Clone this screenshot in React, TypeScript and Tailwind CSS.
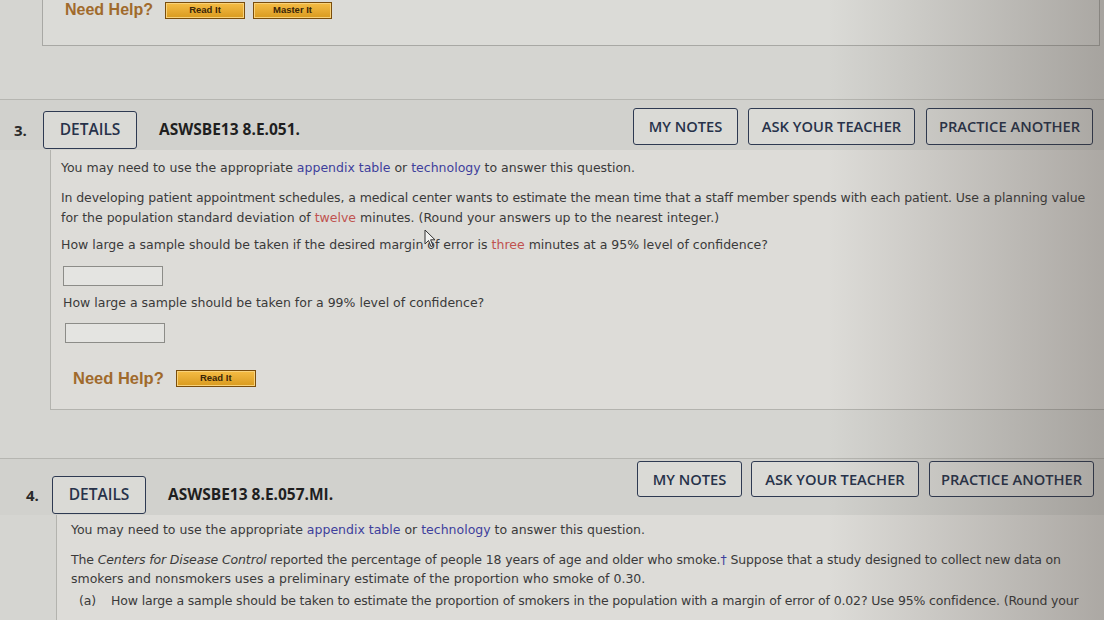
import React from "react";

const body = "font-['DejaVu_Sans',sans-serif]";
const ui = "font-['Open_Sans',sans-serif]";

function ReadBtn({ label, w }: { label: string; w: string }) {
  return (
    <div
      className={`${w} h-[17px] flex items-center justify-center border border-[#7a4d0b] bg-linear-to-b from-[#f5bd45] to-[#d99a1c] shadow-[inset_0_0_0_1px_#f8d27a] text-[9.5px] font-bold text-[#3a2608] font-['Liberation_Sans',sans-serif]`}
    >
      {label}
    </div>
  );
}

function OutlineBtn({ label, w, h, size }: { label: string; w: string; h: string; size: string }) {
  return (
    <div
      className={`${w} ${h} ${size} flex items-center justify-center rounded-[3px] border-[1.5px] border-[#2e3a52] bg-[#dadad6] font-semibold text-[#27324a] ${ui}`}
    >
      {label}
    </div>
  );
}

function NeedHelp({ children, size }: { children: React.ReactNode; size: string }) {
  return (
    <div className="flex items-center">
      <span className={`${size} font-bold text-[#a06a2c] font-['Liberation_Sans',sans-serif] mr-[12px]`}>
        Need Help?
      </span>
      {children}
    </div>
  );
}

const blue = "text-[#3e3f9c]";
const red = "text-[#c0524f]";

export default function App() {
  return (
    <div className={`relative w-[1104px] h-[620px] overflow-hidden bg-[#d5d5d1] ${body}`}>
      {/* previous question tail */}
      <div className="ml-[42px] mr-[4px] h-[46px] border-l border-r border-b border-[#a8a8a4] bg-[#dbdbd7]">
        <div className="flex items-center h-[20px] pl-[22px]">
          <NeedHelp size="text-[16px]">
            <div className="flex gap-[8px]">
              <ReadBtn label="Read It" w="w-[80px]" />
              <ReadBtn label="Master It" w="w-[79px]" />
            </div>
          </NeedHelp>
        </div>
      </div>

      {/* Question 3 header */}
      <div className="mt-[53px] h-[51px] border-t border-[#b6b6b1] bg-[#d1d1cd] flex justify-between items-start">
        <div className={`flex items-center pt-[11px] pl-[14px] ${ui}`}>
          <span className="w-[29px] text-[15px] font-bold text-[#2a2a2a]">3.</span>
          <OutlineBtn label="DETAILS" w="w-[94px]" h="h-[38px]" size="text-[15.5px]" />
          <span className="ml-[22px] text-[15.5px] font-bold text-[#1f1f1f]">ASWSBE13 8.E.051.</span>
        </div>
        <div className="flex pt-[8px] pr-[11px]">
          <OutlineBtn label="MY NOTES" w="w-[105px]" h="h-[37px]" size="text-[14.7px]" />
          <div className="w-[10px]" />
          <OutlineBtn label="ASK YOUR TEACHER" w="w-[167px]" h="h-[37px]" size="text-[14.7px]" />
          <div className="w-[11px]" />
          <OutlineBtn label="PRACTICE ANOTHER" w="w-[167px]" h="h-[37px]" size="text-[14.7px]" />
        </div>
      </div>

      {/* Question 3 body */}
      <div className="ml-[50px] h-[260px] border-l border-b border-[#b3b3ae] bg-[#dddcd8] pl-[10px] pt-[9px] text-[12.5px] text-[#3a3a3a] whitespace-nowrap">
        <p className="leading-[18px]">
          You may need to use the appropriate <span className={blue}>appendix table</span> or{" "}
          <span className={blue}>technology</span> to answer this question.
        </p>
        <p className="mt-[11px] leading-[20px]">
          <span className="tracking-[-0.1px]">
            In developing patient appointment schedules, a medical center wants to estimate the mean time that a staff
            member spends with each patient. Use a planning value
          </span>
          <br />
          for the population standard deviation of <span className={red}>twelve</span> minutes. (Round your answers up
          to the nearest integer.)
        </p>
        <p className="mt-[7px] leading-[20px]">
          How large a sample should be taken if the desired margin of error is <span className={red}>three</span>{" "}
          minutes at a 95% level of confidence?
        </p>
        <div className="mt-[11px] ml-[2px] w-[100px] h-[20px] border border-[#8c8c88] bg-[#e4e4e1]" />
        <p className="mt-[7px] leading-[20px] ml-[2px]">How large a sample should be taken for a 99% level of confidence?</p>
        <div className="mt-[10px] ml-[4px] w-[100px] h-[20px] border border-[#8c8c88] bg-[#e4e4e1]" />
        <div className="mt-[23px] ml-[12px]">
          <NeedHelp size="text-[16.5px]">
            <ReadBtn label="Read It" w="w-[80px]" />
          </NeedHelp>
        </div>
      </div>

      {/* Question 4 header */}
      <div className="mt-[48px] h-[57px] border-t border-[#b6b6b1] bg-[#d1d1cd] flex justify-between items-start">
        <div className={`flex items-center pt-[17px] pl-[26px] ${ui}`}>
          <span className="w-[26px] text-[15px] font-bold text-[#2a2a2a]">4.</span>
          <OutlineBtn label="DETAILS" w="w-[94px]" h="h-[38px]" size="text-[15.5px]" />
          <span className="ml-[22px] text-[15.5px] font-bold text-[#1f1f1f]">ASWSBE13 8.E.057.MI.</span>
        </div>
        <div className="flex pt-[2px] pr-[10px]">
          <OutlineBtn label="MY NOTES" w="w-[105px]" h="h-[36px]" size="text-[14.7px]" />
          <div className="w-[9px]" />
          <OutlineBtn label="ASK YOUR TEACHER" w="w-[168px]" h="h-[36px]" size="text-[14.7px]" />
          <div className="w-[10px]" />
          <OutlineBtn label="PRACTICE ANOTHER" w="w-[165px]" h="h-[36px]" size="text-[14.7px]" />
        </div>
      </div>

      {/* Question 4 body */}
      <div className="ml-[56px] h-[200px] border-l border-[#b3b3ae] bg-[#dddcd8] pl-[14px] pt-[6px] text-[12.5px] text-[#3a3a3a] whitespace-nowrap">
        <p className="leading-[18px]">
          You may need to use the appropriate <span className={blue}>appendix table</span> or{" "}
          <span className={blue}>technology</span> to answer this question.
        </p>
        <p className="mt-[11px] leading-[19px]">
          <span className="tracking-[-0.13px]">
            The <i>Centers for Disease Control</i> reported the percentage of people 18 years of age and older who
            smoke.<span className={blue}>†</span> Suppose that a study designed to collect new data on
          </span>
          <br />
          smokers and nonsmokers uses a preliminary estimate of the proportion who smoke of 0.30.
        </p>
        <p className="mt-[3px] leading-[19px] ml-[8px] flex tracking-[-0.15px]">
          <span className="w-[32px]">(a)</span>
          <span>
            How large a sample should be taken to estimate the proportion of smokers in the population with a margin of
            error of 0.02? Use 95% confidence. (Round your
          </span>
        </p>
      </div>

      {/* mouse cursor */}
      <svg className="absolute left-[424px] top-[229px]" width="12" height="19" viewBox="0 0 12 19">
        <path d="M1 1 L1 15 L4.5 11.5 L7 17.5 L9 16.6 L6.6 10.8 L11 10.8 Z" fill="#f2f2f0" stroke="#333" strokeWidth="1" />
      </svg>

      {/* photo light falloff */}
      <div className="pointer-events-none absolute inset-0 bg-linear-to-r from-transparent from-75% to-[#3a302a]/30" />
    </div>
  );
}
